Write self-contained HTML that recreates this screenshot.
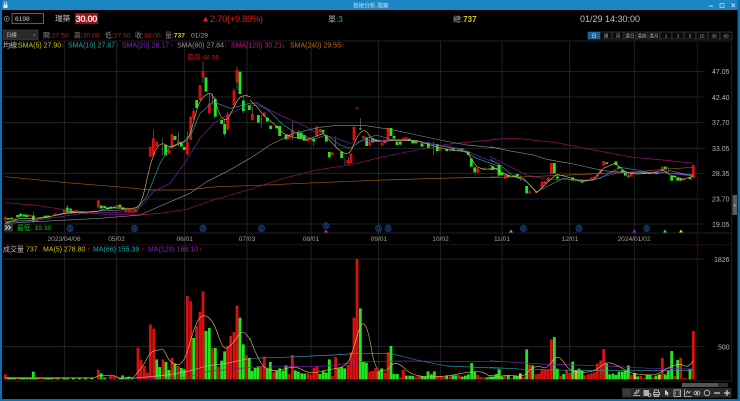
<!DOCTYPE html>
<html><head><meta charset="utf-8"><style>
html,body{margin:0;padding:0;background:#000;width:740px;height:401px;overflow:hidden}
svg{display:block;font-family:"Liberation Sans","Noto Sans CJK TC",sans-serif;filter:blur(.3px)}
.r{stroke:#d81010;stroke-width:8.4;fill:none}
.g{stroke:#20e820;stroke-width:8.4;fill:none}
.y{stroke:#e0c020;stroke-width:8.4;fill:none}
.w{stroke:#8a8a8a;stroke-width:1.6;fill:none}
.l{fill:none;stroke-width:1.9;stroke-linejoin:round}
.s5{stroke:#d8b860}.s10{stroke:#2aa0a8}.s20{stroke:#8020b0}.s60{stroke:#8c8c8c}.s120{stroke:#a01070}.s240{stroke:#a05a18}
.ax{fill:#b4b4b4;font-size:7px}
.dt{fill:#a0a0a0;font-size:6.6px;text-anchor:middle}
.h{font-size:7px}
.pb{fill:#b0b0b0;font-size:4.6px;text-anchor:middle}
.m{fill:#2a70c8;font-size:3.8px;text-anchor:middle}
</style></head><body>
<svg width="740" height="401" viewBox="0 0 740 401" xmlns="http://www.w3.org/2000/svg">
<rect width="740" height="401" fill="#000"/>
<!-- window frame -->
<rect x="0" y="0" width="740" height="10" fill="#1a86c4"/>
<rect x="0" y="0" width="2" height="401" fill="#0f6fae"/>
<rect x="737.6" y="0" width="2.4" height="401" fill="#0f6fae"/>
<rect x="0" y="399" width="740" height="2" fill="#0f6fae"/>
<rect x="3.5" y="4.5" width="4" height="3.5" fill="#d8ecf8"/>
<path d="M4.3 4.5V3.2a1.2 1.2 0 0 1 2.4 0V4.5" fill="none" stroke="#d8ecf8" stroke-width=".7"/>
<text x="353" y="7.5" font-size="5.6" fill="#cfe6f5">技術分析-瑞築</text>
<path d="M709 6h4" stroke="#bfe0f4" stroke-width="1"/>
<rect x="720" y="3.5" width="4" height="4" fill="none" stroke="#bfe0f4" stroke-width=".7"/>
<path d="M731.5 3.5l3.5 3.5M735 3.5l-3.5 3.5" stroke="#e0f0fa" stroke-width=".8"/>

<!-- row 1 -->
<circle cx="6.7" cy="18.7" r="2.5" fill="none" stroke="#aaa" stroke-width=".6"/>
<path d="M6 17.5l1.6 1.2L6 20z" fill="#aaa"/>
<rect x="12" y="13.7" width="31.5" height="10" fill="#050505" stroke="#8a8a8a" stroke-width=".7"/>
<text x="15" y="21" font-size="6.6" fill="#c8c8c8">6198</text>
<text x="55" y="21.2" font-size="7.6" fill="#c4c4c4">瑞築</text>
<rect x="75" y="13" width="23" height="11" fill="#a00f12"/>
<text x="75.5" y="22" font-size="9.6" font-weight="bold" fill="#f2e6e6" textLength="22">30.00</text>
<path d="M203 21.5l2.6-5 2.6 5z" fill="#e01818"/>
<text x="210" y="22" font-size="9.4" fill="#d81c1c" textLength="53">2.70(+9.89%)</text>
<text x="328" y="22" font-size="8" fill="#a8a8a8">單:<tspan fill="#22c022">3</tspan></text>
<text x="453" y="22" font-size="8" fill="#a8a8a8">總:<tspan fill="#d8c820" font-weight="bold">737</tspan></text>
<text x="580" y="22" font-size="9" fill="#c0c0c0" textLength="60">01/29 14:30:00</text>

<!-- row 2 -->
<rect x="3" y="30" width="35" height="9.5" fill="#2a2a2a" stroke="#555" stroke-width=".5"/>
<text x="6" y="37" font-size="5.4" fill="#c0c0c0">日線</text>
<path d="M33 34.5h2.6l-1.3 1.3z" fill="#999"/>
<g font-size="6.8">
<text x="43" y="37.5" fill="#909090">開:<tspan fill="#c81818">27.50</tspan></text>
<text x="74" y="37.5" fill="#909090">高:<tspan fill="#c81818">30.00</tspan></text>
<text x="105" y="37.5" fill="#909090">低:<tspan fill="#c81818">27.50</tspan></text>
<text x="135" y="37.5" fill="#909090">收:<tspan fill="#c81818">30.00</tspan></text>
<text x="165" y="37.5" fill="#909090">量:<tspan fill="#d8c820" font-weight="bold">737</tspan></text>
<text x="191" y="37.5" fill="#a8a8a8">01/29</text>
</g>
<!-- period buttons -->
<g fill="#0a0a0a" stroke="#555" stroke-width=".5">
<rect x="588" y="32" width="12" height="7" fill="#1a5f90" stroke="#2a80b8"/>
<rect x="600" y="32" width="12" height="7"/><rect x="612" y="32" width="12" height="7"/><rect x="624" y="32" width="12" height="7"/><rect x="636" y="32" width="12" height="7"/><rect x="648" y="32" width="12" height="7"/><rect x="660" y="32" width="12" height="7"/><rect x="672" y="32" width="12" height="7"/><rect x="684" y="32" width="12" height="7"/><rect x="696" y="32" width="12" height="7"/><rect x="708" y="32" width="12" height="7"/><rect x="720" y="32" width="12" height="7"/>
</g>
<g class="pb">
<text x="594" y="37.5" fill="#dff">日</text><text x="606" y="37.5">週</text><text x="618" y="37.5">月</text><text x="630" y="37.5">還日</text><text x="642" y="37.5">還週</text><text x="654" y="37.5">還月</text><text x="666" y="37.5">1</text><text x="678" y="37.5">3</text><text x="690" y="37.5">5</text><text x="702" y="37.5">15</text><text x="714" y="37.5">30</text><text x="726" y="37.5">60</text>
</g>

<!-- grid -->
<g stroke="#2b2b2b" stroke-width=".8" fill="none">
<path d="M3 41H732M3 71.7H705M3 97H705M3 122.7H705M3 148.3H705M3 173.3H705M3 199H705M3 224H705M3 233H732M3 259H705M3 346.7H705M3 381H732"/>
<path d="M64.3 41V381M116.3 41V381M184.7 41V381M247 41V381M311 41V381M378.7 41V381M440.3 41V381M502 41V381M569.7 41V381M634.3 41V381M731.7 41V381"/>
</g>
<path d="M3 244.7H732" stroke="#2a0a14" stroke-width="1"/>
<path d="M697.3 41V381" stroke="#33101a" stroke-width="1"/>

<!-- row 3 legend -->
<g class="h">
<text x="3" y="47.5" fill="#c8c8c8">均線:</text>
<text x="18" y="47.5" fill="#c8c820">SMA(5) 27.90</text><text x="61" y="47.5" fill="#d02020">↑</text>
<text x="68" y="47.5" fill="#20a8b0">SMA(10) 27.87</text><text x="116" y="47.5" fill="#d02020">↑</text>
<text x="122" y="47.5" fill="#8a20c8">SMA(20) 28.17</text><text x="170" y="47.5" fill="#d02020">↑</text>
<text x="177" y="47.5" fill="#989898">SMA(60) 27.84</text><text x="224" y="47.5" fill="#d02020">↑</text>
<text x="231" y="47.5" fill="#c01880">SMA(120) 30.21</text><text x="282" y="47.5" fill="#20b020">↓</text>
<text x="290" y="47.5" fill="#c06a18">SMA(240) 29.55</text><text x="341" y="47.5" fill="#d02020">↑</text>
</g>
<text x="187" y="59.5" font-size="6.8" fill="#c01818">最高:48.95</text>

<!-- axis -->
<g class="ax">
<text x="712" y="74">47.05</text><text x="712" y="100">42.40</text><text x="712" y="125">37.70</text><text x="712" y="151">33.05</text><text x="712" y="176">28.35</text><text x="712" y="201.5">23.70</text><text x="712" y="227">19.05</text>
<text x="714" y="262">1826</text><text x="718" y="349.5">500</text>
</g>
<rect x="732.5" y="195" width="4.5" height="20" fill="#5c5c5c"/>
<path d="M735.5 204l-1.3 1.2 1.3 1.2" fill="none" stroke="#ccc" stroke-width=".6"/>

<!-- dates -->
<g class="dt">
<text x="64" y="241">2023/04/06</text><text x="116.5" y="241">05/02</text><text x="184.7" y="241">06/01</text><text x="247" y="241">07/03</text><text x="311" y="241">08/01</text><text x="379" y="241">09/01</text><text x="440.5" y="241">10/02</text><text x="502" y="241">11/01</text><text x="570" y="241">12/01</text><text x="634" y="241">2024/01/02</text>
</g>

<!-- PANEL A: candles left -->
<g transform="translate(0,50) scale(.33333)">
<path class="w" d="M460 240V320M487 265V316M535 245V290M562 245V316M609 34V100M711 50V120M674 205V260M628 130V190M637 130V165M581 175V210M100 485V518M295 448V476M203 465V490M645 140V205M683 185V240M702 115V170M730 140V190"/>
<path class="r" d="M16 500V510M45 505V512M91 494V500M110 510V514M119 503V507M128 500V505M165 490V495M193 478V490M230 480V487M240 485V490M258 487V492M267 487V490M276 485V490M295 451V472M351 465V472M378 477V487M388 480V488M397 482V488M406 480V487M451 290V320M460 265V316M470 275V290M507 300V312M516 252V295M535 272V282M562 275V314M572 200V270M581 183V205M600 105V150M609 63V83M628 160V190M683 193V237M702 122V165M711 60V97"/>
<path class="g" d="M25 504V509M35 503V508M53 495V502M62 491V500M72 493V500M81 494V501M100 497V514M136 497V504M145 497V503M202 473V487M212 476V488M221 482V488M248 484V489M304 466V475M314 468V474M323 472V478M332 470V476M342 470V474M360 464V472M369 472V478M497 285V316M525 258V270M544 276V290M553 291V300M590 150V174M618 82V125M646 147V200M665 210V222M674 222V252M720 65V132M730 152V183M748 165V180"/>
<polyline class="l s240" points="15,380 200,398 350,410 450,420 560,420 650,410 750,407"/>
<polyline class="l s120" points="15,458 100,465 200,480 300,492 420,495 480,490 560,478 640,450 750,418"/>
<polyline class="l s60" points="15,520 300,505 420,495 500,460 570,430 620,395 680,365 750,325"/>
<polyline class="l s20" points="15,515 100,512 250,490 410,485 460,425 510,400 560,330 600,265 640,220 700,185 750,165"/>
<polyline class="l s10" points="15,515 100,510 200,490 300,483 410,478 440,440 480,340 510,290 550,275 575,250 600,190 640,155 690,175 750,160"/>
<path class="l s5" d="M15,520 L60,505 100,505 140,502 180,492 240,486 290,485 Q320,473 350,474 Q380,475 397,475 Q415,475 422,457 Q430,440 440,392 Q450,345 460,317 Q470,290 480,284 Q490,278 500,286 Q510,295 525,287 Q540,280 552,276 Q565,272 575,236 Q585,200 592,175 Q600,150 612,139 Q625,128 632,131 Q640,135 650,167 Q660,200 670,207 Q680,215 690,195 Q700,175 712,152 Q725,130 750,140"/>
</g>
<!-- PANEL B: candles middle -->
<g transform="translate(250,50) scale(.33333)">
<path class="w" d="M7 170V212M34 195V232M127 215V270M145 240V268M191 262V288M256 260V290M285 325V345M295 320V345M331 205V240M359 255V290M550 275V315M600 290V305"/>
<path class="r" d="M7 192V210M43 187V200M117 256V268M127 240V258M172 265V273M182 268V272M200 229V260M210 237V248M247 307V315M294 330V340M303 310V340M312 230V272M321 172V176M340 258V265M359 275V285M396 278V287M405 272V280M414 234V270M460 263V272M469 262V272M571 295V302M627 297V303M683 355V368M720 355V360"/>
<path class="g" d="M25 195V218M52 203V215M62 227V237M80 227V235M89 228V258M108 255V268M145 248V265M154 248V266M163 255V272M191 266V274M219 240V248M229 256V275M238 306V322M275 305V324M331 235V238M350 262V288M368 265V277M377 268V275M386 270V275M423 234V258M432 258V266M441 275V285M451 275V284M478 266V273M488 270V280M497 272V280M516 280V290M535 277V295M562 282V303M590 297V303M609 296V300M636 295V302M655 305V315M664 326V350M674 352V367M702 355V358M729 352V360M748 345V375"/>
<polyline class="l s240" points="0,407 200,398 400,390 600,384 750,381"/>
<polyline class="l s120" points="0,418 100,385 200,360 300,345 400,320 500,300 600,282 750,267"/>
<polyline class="l s60" points="0,325 60,285 130,250 210,232 260,226 340,226 420,238 500,255 570,270 650,285 750,295"/>
<polyline class="l s20" points="0,165 40,170 100,200 160,225 200,250 260,265 300,280 340,272 400,270 500,272 570,285 640,298 700,325 750,342"/>
<polyline class="l s10" points="0,162 20,158 60,185 100,225 140,250 190,268 230,255 270,285 300,295 340,268 380,255 420,268 480,270 540,282 630,298 680,325 750,350"/>
<path class="l s5" d="M0,150 L20,170 40,195 70,220 100,250 130,262 170,270 200,258 220,250 Q240,272 255,288 Q270,305 285,310 Q300,315 310,287 Q320,260 332,247 Q345,235 355,252 Q365,270 382,272 Q400,275 420,272 Q440,270 500,272 L540,285 600,300 650,305 680,350 700,358 750,355"/>
</g>
<!-- PANEL C: candles right -->
<g transform="translate(490,50) scale(.33333)">
<path class="w" d="M91 376V392M119 420V432M202 375V392M415 370V386M535 350V365"/>
<path class="r" d="M46 373V386M91 383V386M119 425V428M138 425V428M156 395V413M165 393V402M175 382V394M184 339V372M230 385V388M304 382V388M313 380V385M322 374V380M332 358V372M341 333V347M424 370V380M517 350V364M581 386V391M610 345V384"/>
<path class="g" d="M8 349V360M27 345V377M36 368V376M55 375V381M73 376V380M82 372V380M110 408V430M193 339V370M202 380V386M248 382V392M276 392V398M350 337V342M378 334V345M387 350V356M397 360V366M406 364V377M415 377V380M462 367V371M480 369V372M499 369V372M526 350V358M545 378V392M554 377V382M563 384V392M572 385V392M600 382V388"/>
<polyline class="l s240" points="0,383 120,380 300,372 440,365 520,358 610,352"/>
<polyline class="l s120" points="0,270 50,265 100,267 200,278 300,298 430,322 520,330 610,340"/>
<polyline class="l s60" points="0,290 60,303 130,315 170,328 250,342 340,362 420,368 520,368 610,375"/>
<polyline class="l s20" points="0,320 50,345 110,375 170,388 230,388 300,390 380,370 440,365 520,368 610,378"/>
<polyline class="l s10" points="0,328 30,345 70,378 110,395 140,425 180,405 220,385 280,395 330,385 390,352 440,360 500,372 540,362 610,378"/>
<polyline class="l s5" points="0,345 30,365 60,378 100,385 140,428 180,390 200,373 230,380 270,392 310,390 340,355 375,340 410,368 440,372 480,370 520,360 540,375 580,388 610,378"/>
</g>

<!-- markers -->
<g fill="#071630" stroke="#164a90" stroke-width=".7">
<circle cx="70" cy="228.5" r="3.1"/><circle cx="134.5" cy="228.5" r="3.1"/><circle cx="203" cy="228.5" r="3.1"/><circle cx="261.5" cy="228.5" r="3.1"/><circle cx="326" cy="225.7" r="3.1"/><circle cx="378.7" cy="228.5" r="3.1"/><circle cx="388" cy="228.5" r="3.1"/><circle cx="523.5" cy="228.5" r="3.1"/><circle cx="579" cy="228.5" r="3.1"/><circle cx="646.7" cy="228.5" r="3.1"/>
</g>
<g class="m">
<text x="70" y="230">月</text><text x="134.5" y="230">月</text><text x="203" y="230">月</text><text x="261.5" y="230">月</text><text x="326" y="227.2">月</text><text x="378.7" y="230">月</text><text x="388" y="230">月</text><text x="523.5" y="230">月</text><text x="579" y="230">月</text><text x="646.7" y="230">月</text>
</g>
<path d="M324 232.5l2-3 2 3z" fill="#e02090"/>
<path d="M509 232.5l2-3 2 3z" fill="#909090"/>
<path d="M632.3 232.5l2-3 2 3z" fill="#a020d0"/>
<path d="M663 232.5l2-3 2 3z" fill="#20c8d8"/>
<path d="M679 232.5l2-3 2 3z" fill="#e8e020"/>
<rect x="4" y="223.5" width="9" height="8" fill="#3a3a3a"/>
<path d="M5.5 225.5l2 2-2 2M8.5 225.5l2 2-2 2" fill="none" stroke="#ddd" stroke-width=".9"/>
<text x="17" y="229.8" font-size="6.8" fill="#22b822">最低: 19.30</text>

<!-- volume legend -->
<g class="h">
<text x="3" y="251.5" fill="#b8b8b8">成交量</text>
<text x="26" y="251.5" fill="#c8c820">737</text>
<text x="43" y="251.5" fill="#c8c820">MA(5) 278.80</text><text x="87" y="251.5" fill="#d02020">↑</text>
<text x="93" y="251.5" fill="#20a8b0">MA(66) 155.39</text><text x="141" y="251.5" fill="#d02020">↑</text>
<text x="148" y="251.5" fill="#8a20c8">MA(120) 168.10</text><text x="199" y="251.5" fill="#d02020">↑</text>
</g>

<!-- VOLUME left -->
<g transform="translate(0,240) scale(.33333)">
<path class="g" d="M25 413V418M34 413V418M44 414V418M62 414V418M71 414V418M81 414V418M91 414V418M100 395V418M109 413V418M137 414V418M146 414V418M155 414V418M174 412V418M192 414V418M202 414V418M220 414V418M238 414V418M257 414V418M276 414V418M304 400V418M314 412V418M360 412V418M368 406V418M378 412V418M386 410V418M396 413V418M470 358V418M479 381V418M498 366V418M507 390V418M525 370V418M544 384V418M553 388V418M581 294V418M618 273V418M628 264V418M646 324V418M665 362V418M674 334V418M720 233V418M730 313V418M748 354V418"/>
<path class="r" d="M16 403V418M53 411V418M118 412V418M128 412V418M165 412V418M295 389V418M332 408V418M342 408V418M414 323V418M423 360V418M433 378V418M442 398V418M451 253V418M461 266V418M489 358V418M516 354V418M535 378V418M562 168V418M572 184V418M590 258V418M600 216V418M609 154V418M637 324V418M655 380V418M683 318V418M692 288V418M702 276V418M711 197V418M739 345V418"/>
<polyline class="l s120" points="15,412 400,414 560,413 620,395 750,382"/>
<polyline class="l" stroke="#bfa8c8" points="400,415 500,405 560,395 620,378 680,370 750,355"/>
<path class="l s5" d="M15,414 L280,414 300,406 340,406 360,415 400,412 Q430,380 440,357 Q450,335 465,332 Q480,330 485,327 Q490,325 500,347 Q510,370 530,374 Q550,378 565,324 Q580,270 592,245 Q605,220 622,230 Q640,240 655,287 Q670,335 685,322 Q700,310 715,286 Q730,262 750,300"/>
</g>
<!-- VOLUME middle -->
<g transform="translate(250,240) scale(.33333)">
<path class="g" d="M6 393V418M15 384V418M24 379V418M52 385V418M61 366V418M80 392V418M89 385V418M99 392V418M108 376V418M136 391V418M145 395V418M155 400V418M164 401V418M210 402V418M220 394V418M229 398V418M238 358V418M266 385V418M275 381V418M284 385V418M331 205V418M340 365V418M349 368V418M386 393V418M395 385V418M423 318V418M432 402V418M442 402V418M469 407V418M479 407V418M488 408V418M516 409V418M525 409V418M534 394V418M544 403V418M553 394V418M590 406V418M609 406V418M618 406V418M637 410V418M646 407V418M655 403V418M665 369V418M674 395V418M711 412V418M720 410V418M730 410V418M739 403V418M748 388V418"/>
<path class="r" d="M33 378V418M43 350V418M71 397V418M117 402V418M127 345V418M174 400V418M183 404V418M192 384V418M201 380V418M247 408V418M257 351V418M294 375V418M303 337V418M312 233V418M321 57V418M359 395V418M368 393V418M377 384V418M405 397V418M414 337V418M451 412V418M460 390V418M497 410V418M507 406V418M562 408V418M572 408V418M581 412V418M600 410V418M628 406V418M683 405V418M692 411V418M702 412V418"/>
<polyline class="l s20" points="0,382 230,378 330,365 450,363 750,365"/>
<polyline class="l s10" points="0,355 100,352 250,345 330,340 420,340 500,360 590,378 750,385"/>
<path class="l s5" d="M0,295 Q30,378 50,386 Q70,395 90,390 Q110,385 125,382 Q140,380 160,391 Q180,402 205,396 Q230,390 260,385 Q290,380 300,355 Q310,330 322,285 Q335,240 345,255 Q355,270 365,330 Q375,390 392,392 Q410,395 420,381 Q430,367 442,371 Q455,375 467,388 Q480,402 505,407 Q530,412 565,410 Q600,408 630,401 Q660,395 680,395 Q700,395 710,403 Q720,412 750,400"/>
</g>
<!-- VOLUME right -->
<g transform="translate(490,240) scale(.33333)">
<path class="g" d="M8 410V418M18 407V418M27 388V418M36 410V418M55 405V418M73 408V418M82 408V418M110 328V418M128 376V418M193 291V418M202 386V418M221 402V418M248 365V418M267 386V418M276 391V418M350 371V418M359 403V418M369 401V418M378 405V418M387 395V418M397 395V418M406 393V418M415 376V418M443 409V418M471 405V418M480 405V418M498 407V418M526 403V418M535 391V418M545 333V418M563 360V418M600 387V418"/>
<path class="r" d="M45 405V418M64 415V418M101 411V418M119 374V418M138 403V418M147 401V418M156 388V418M165 390V418M174 390V418M184 298V418M212 407V418M230 390V418M239 399V418M285 406V418M295 403V418M304 400V418M313 397V418M322 370V418M332 361V418M341 327V418M424 405V418M452 408V418M462 414V418M489 412V418M517 354V418M554 408V418M572 354V418M582 414V418M591 416V418M610 273V418"/>
<path class="y" d="M91 400V418M258 390V418M434 399V418M508 403V418"/>
<polyline class="l s20" points="0,362 150,372 350,378 480,385 610,387"/>
<polyline class="l s10" points="0,382 100,388 300,392 450,392 610,392"/>
<path class="l s5" d="M0,415 Q50,403 75,407 Q100,412 112,398 Q125,385 135,381 Q145,377 157,382 Q170,388 182,369 Q195,350 205,352 Q215,355 227,375 Q240,395 265,396 Q290,398 305,394 Q320,390 335,377 Q350,365 365,370 Q380,375 400,387 Q420,400 440,402 Q460,405 480,405 Q500,405 515,395 Q530,385 550,377 Q570,370 582,377 Q595,385 610,362"/>
</g>

<!-- scrollbar -->
<rect x="682" y="383" width="46" height="4" fill="#2e2e2e"/>
<rect x="682" y="383" width="36" height="4" fill="#555"/>

<!-- toolbar -->
<rect x="622" y="388" width="109.5" height="9.5" fill="#2a2a2a"/>
<g fill="none" stroke="#c8c8c8" stroke-width=".8">
<rect x="623.5" y="389.5" width="7" height="6.5" fill="#3a3a3a" stroke="#3a3a3a"/>
<path d="M633 395.5h7M634 394l3-3.5 2-.5-.5 2-3.5 2"/>
<rect x="643.5" y="390" width="5.5" height="6" fill="#b0b0b0" stroke="none"/><circle cx="649.5" cy="395" r="1.5"/>
<path d="M654.5 392.5v-2.5h4v2.5M653.5 392.5h6v2.5h-6zM654.5 394.5h4v2h-4z"/>
<path d="M665 389.5v6l1.5-1.3 1 2 .8-.4-1-2h2z" fill="#d0d0d0" stroke="none"/>
<rect x="674" y="390" width="6.5" height="6.5"/><path d="M675.5 391.5v3.5M679 391.5v3.5" stroke-width=".6"/>
<path d="M684.5 389.5v7h7M686 394l1.5-3 1.5 2 1.5-2"/>
<ellipse cx="697" cy="393" rx="3" ry="2"/><circle cx="697" cy="393" r=".7" fill="#c8c8c8"/>
<circle cx="707" cy="393" r="2.8"/>
<path d="M714 393h6" stroke-width="1.3"/>
<path d="M724 393h6M727 390v6" stroke-width="1.3"/>
</g>
</svg>
</body></html>
